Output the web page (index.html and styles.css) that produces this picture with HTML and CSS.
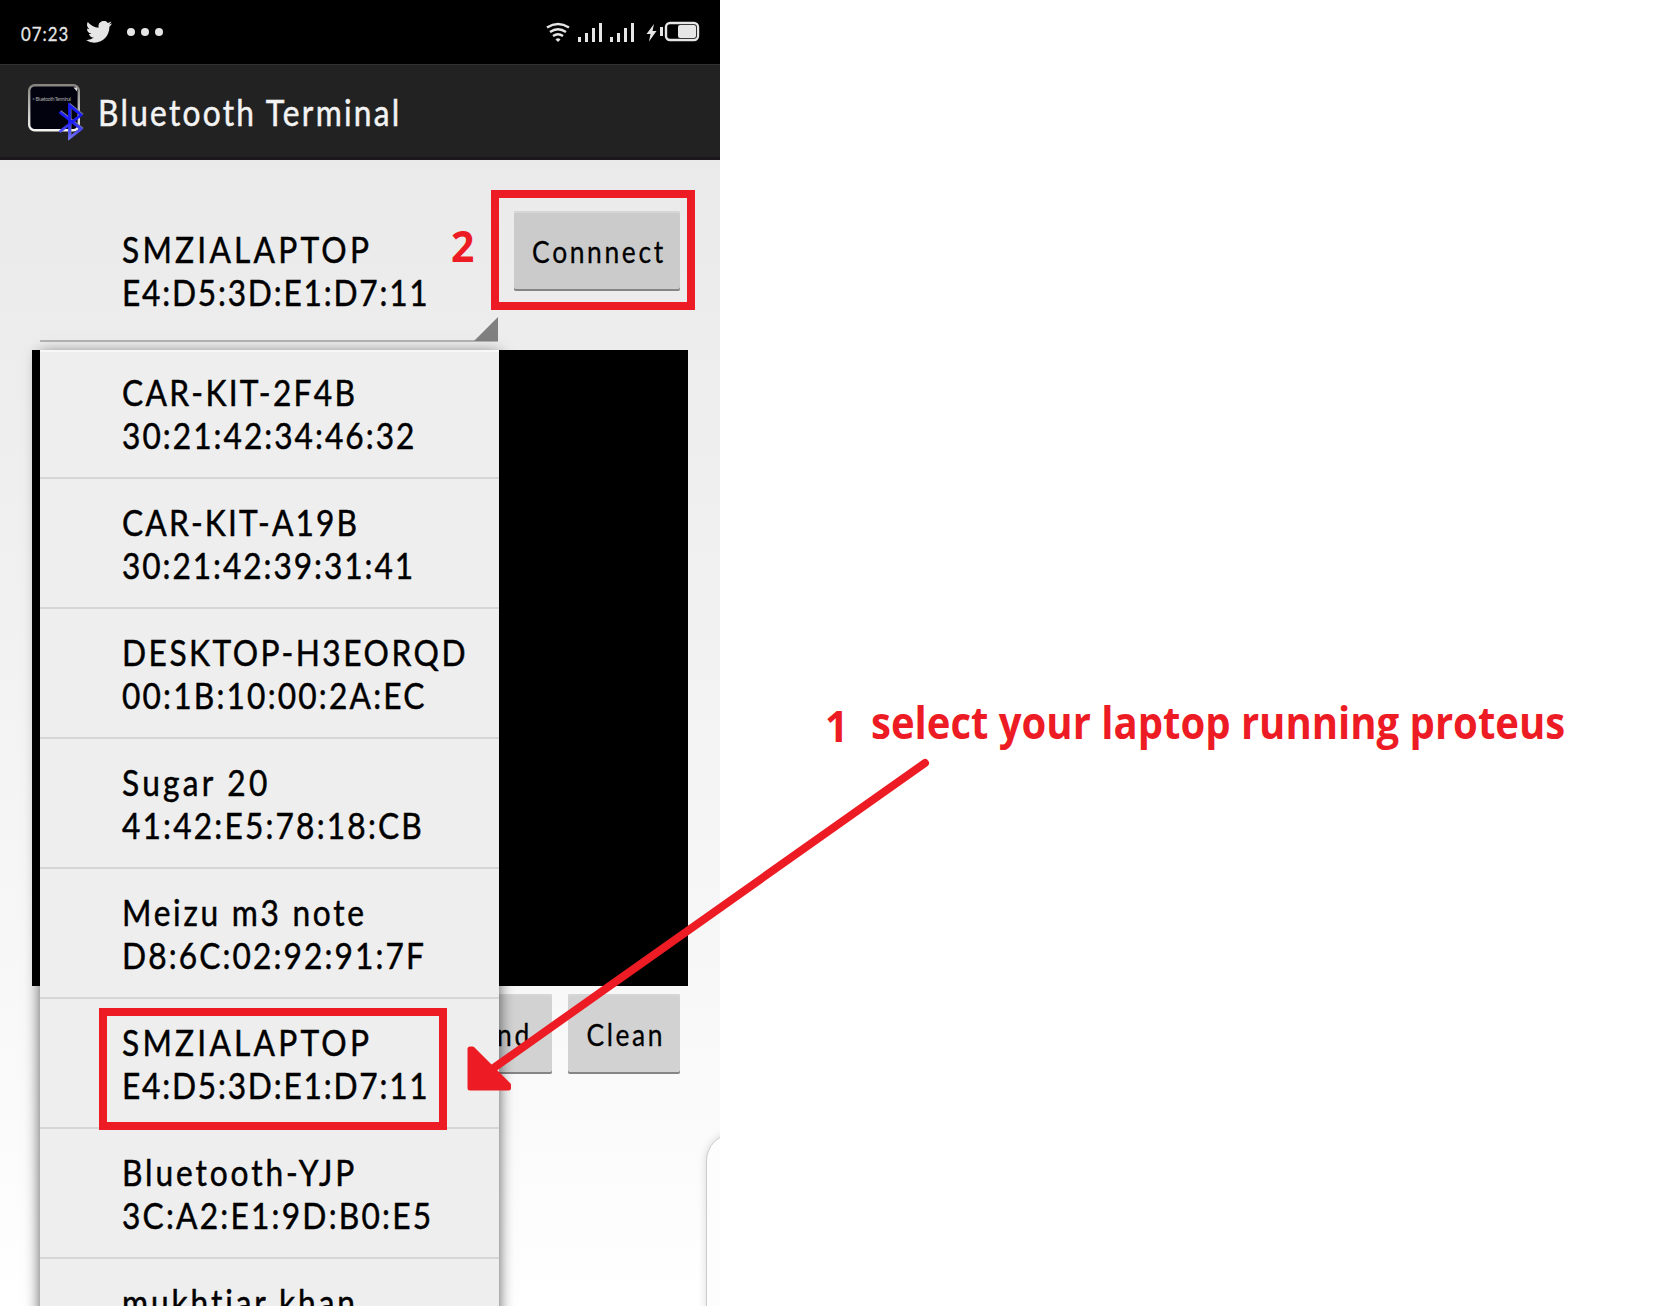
FILE: index.html
```html
<!DOCTYPE html>
<html lang="en">
<head>
<meta charset="utf-8">
<title>Bluetooth Terminal</title>
<link rel="stylesheet" href="styles.css">
</head>
<body>
<main class="phone">
  <header class="status">
    <span class="clock"><span class="t">07:23</span></span>
    <svg class="bird" width="26" height="22" viewBox="0 0 26 22"><path d="M26 2.600a10.500 10.500 0 0 1-3 .9A5.400 5.400 0 0 0 25.300.500a10.500 10.500 0 0 1-3.400 1.400A5.300 5.300 0 0 0 12.700 6.700 15 15 0 0 1 1.800 1a5.300 5.300 0 0 0 1.700 7.200A5.200 5.200 0 0 1 1 7.500a5.400 5.400 0 0 0 4.300 5.300 5.500 5.500 0 0 1-2.400.1 5.300 5.300 0 0 0 5 3.700A10.700 10.700 0 0 1 0 19a15.200 15.200 0 0 0 8.200 2.700c9.800 0 15.500-8.400 15.200-16A10.900 10.900 0 0 0 26 2.600z"/></svg>
    <svg class="dots" width="36" height="8" viewBox="0 0 36 8"><circle cx="4" cy="4" r="4"/><circle cx="18" cy="4" r="4"/><circle cx="32" cy="4" r="4"/></svg>
    <svg class="signals" width="154" height="22" viewBox="546 21 154 22">
      <g class="wifi"><path d="M547 27.500Q558 20.500 569 27.500"/><path d="M550 32Q558 26.500 566 32"/><path d="M553 36Q558 32.500 563 36"/></g>
      <path d="M555.500 39.500Q558 37 560.500 39.500L558 42z"/>
      <path d="M578 37h3v5h-3zM585 33h3v9h-3zM592 28h3v14h-3zM599 23h3v19h-3zM610 37h3v5h-3zM617 33h3v9h-3zM624 28h3v14h-3zM631 23h3v19h-3z"/>
      <path d="M654 24l-7.500 10h4l-1.500 7.500 7.500-10.500h-4zM660 27h3v9h-3z"/>
      <rect class="shell" x="666" y="23" width="32" height="17" rx="4"/>
      <rect x="678" y="25" width="18" height="13" rx="2"/>
    </svg>
  </header>
  <div class="appbar">
    <svg width="58" height="60" viewBox="27 81 58 60">
      <defs><linearGradient id="rim" x2="0" y2="1"><stop offset="0" stop-color="#888580"/><stop offset="1" stop-color="#f4f4f2"/></linearGradient>
      <linearGradient id="blue" x2="0" y2="1"><stop offset=".5" stop-color="#1c1cf4"/><stop offset="1" stop-color="#7474f8"/></linearGradient></defs>
      <rect x="29.200" y="85.200" width="49.600" height="45" rx="5.500" fill="#02020f" stroke="url(#rim)" stroke-width="2.400"/>
      <path d="M73.500 87.500h3.500v4z" fill="#ddd"/>
      <text x="32" y="101" class="tiny" textLength="39">&gt; Bluetooth Terminal</text>
      <path d="M59.500 112L81 129 69.500 138V105.500L81 115 59.500 132" transform="translate(1 -1)" fill="none" stroke="#777ba0" stroke-width="2"/>
      <path d="M59.500 112L81 129 69.500 138V105.500L81 115 59.500 132" fill="none" stroke="url(#blue)" stroke-width="2.800"/>
    </svg>
    <h1><span class="t">Bluetooth Terminal</span></h1>
  </div>
  <section class="content">
    <div class="top">
      <div class="spinner device laptop">
        <p class="t name">SMZIALAPTOP</p><p class="t mac">E4:D5:3D:E1:D7:11</p>
      </div>
      <button class="btn connect"><span class="t">Connnect</span></button>
    </div>
    <div class="terminal"></div>
    <div class="bottom">
      <button class="btn send"><span class="t">Send</span></button>
      <button class="btn clean"><span class="t">Clean</span></button>
    </div>
  </section>
  <ul class="popup">
    <li class="device kit-2f"><p class="t name">CAR-KIT-2F4B</p><p class="t mac">30:21:42:34:46:32</p></li>
    <li class="device kit-a1"><p class="t name">CAR-KIT-A19B</p><p class="t mac">30:21:42:39:31:41</p></li>
    <li class="device desktop"><p class="t name">DESKTOP-H3EORQD</p><p class="t mac">00:1B:10:00:2A:EC</p></li>
    <li class="device sugar"><p class="t name">Sugar 20</p><p class="t mac">41:42:E5:78:18:CB</p></li>
    <li class="device meizu"><p class="t name">Meizu m3 note</p><p class="t mac">D8:6C:02:92:91:7F</p></li>
    <li class="device laptop"><p class="t name">SMZIALAPTOP</p><p class="t mac">E4:D5:3D:E1:D7:11</p></li>
    <li class="device yjp"><p class="t name">Bluetooth-YJP</p><p class="t mac">3C:A2:E1:9D:B0:E5</p></li>
    <li class="device khan"><p class="t name">mukhtiar khan</p></li>
  </ul>
  <div class="handle"></div>
</main>
<div class="mark mark-connect"></div>
<div class="mark mark-laptop"></div>
<span class="note note-two">2</span>
<span class="note note-one">1</span>
<span class="note note-text">select your laptop running proteus</span>
<svg class="arrow" width="470" height="340" viewBox="460 756 470 340"><path d="M925 763L490 1070.500" stroke-width="8" stroke-linecap="round"/><path d="M470 1049V1088H508.500V1085L472.500 1049z" stroke-width="5" stroke-linejoin="round"/></svg>
</body>
</html>
```
FILE: styles.css
```css
* { box-sizing: border-box; }
body { margin: 0; width: 1656px; height: 1306px; overflow: hidden; position: relative; background: #fff; font-family: Lato, "Liberation Sans", sans-serif; color: #000; }
h1, p, ul { margin: 0; padding: 0; font-weight: 400; }

/* narrow, widely spaced lettering */
.t { display: block; width: max-content; white-space: nowrap; transform: scaleX(.88); transform-origin: 0 50%; -webkit-text-stroke: .5px currentColor; }

.phone { position: relative; display: flex; flex-direction: column; width: 720px; height: 1306px; overflow: hidden; background: linear-gradient(#eaeaea 160px, #f0f0f0 550px, #fafafa 1100px, #fff 1306px); }
.status { display: flex; align-items: center; height: 64px; padding: 0 20px; background: #000; color: #e6e6e6; fill: #e6e6e6; }
.clock { width: 65px; margin-left: 1px; padding-top: 2px; font-size: 20px; letter-spacing: 1.2px; }
.clock .t { -webkit-text-stroke-width: .3px; transform: scaleX(.84); }
.dots { margin-left: 15px; }
.signals { margin-left: auto; }
.wifi, .shell { fill: none; stroke: #e6e6e6; stroke-width: 2.4; }
.appbar { display: flex; align-items: center; height: 96px; padding-left: 27px; background: #222; border-top: 1px solid #333; border-bottom: 3px solid #1a181a; color: #f3f3f3; }
.appbar h1 { margin-left: 13px; padding-top: 3px; font-size: 36px; line-height: 43px; letter-spacing: 2.58px; }
.tiny { font-size: 5px; fill: #aaa; }

.content { display: flex; flex-direction: column; padding: 51px 32px 0; }
.top { display: flex; height: 139px; }
.device { padding-left: 82px; font-size: 36px; line-height: 43px; }
.spinner { position: relative; width: 458px; height: 131px; margin-left: 8px; padding-top: 17px; border-bottom: 2px solid #b4b4b4; }
.spinner::after { content: ""; position: absolute; right: 0; bottom: -1px; width: 24px; height: 24px; background: #808080; clip-path: polygon(100% 0, 100% 100%, 0 100%); }
.btn { display: flex; align-items: center; justify-content: center; height: 80px; padding: 0; border: 0; border-radius: 2px; background: #cbcbcb; box-shadow: inset 0 2px #d6d6d6, inset 0 -2px #858585; font: 30px/36px Lato, "Liberation Sans", sans-serif; color: #000; letter-spacing: 3px; }
.btn .t { transform-origin: 50% 50%; margin-left: 4px; -webkit-text-stroke-width: .3px; }
.connect { width: 166px; margin-left: 16px; }
.terminal { height: 636px; background: #000; }
.bottom { display: flex; justify-content: flex-end; gap: 16px; padding: 8px 8px 0; }
.bottom .btn { width: 112px; background: #d2d2d2; }

.popup { position: absolute; left: 40px; top: 350px; width: 459px; height: 970px; list-style: none; background: #eee; box-shadow: 0 4px 14px rgba(0,0,0,.65), inset 0 2px #f8f8f8; }
.popup li { height: 130px; padding-top: 22px; border-bottom: 2px solid #d6d6d6; }
.popup li:first-child { height: 129px; padding-top: 21px; }

.laptop .name { letter-spacing: 3.65px; }
.laptop .mac { letter-spacing: 2.03px; }
.kit-2f .name { letter-spacing: 2.6px; }
.kit-2f .mac { letter-spacing: 2.3px; }
.kit-a1 .name { letter-spacing: 2.45px; }
.kit-a1 .mac { letter-spacing: 2.2px; }
.desktop .name { letter-spacing: 2.84px; }
.desktop .mac { letter-spacing: 2.48px; }
.sugar .name { letter-spacing: 3.7px; }
.sugar .mac { letter-spacing: 2.48px; }
.meizu .name { letter-spacing: 3.1px; }
.meizu .mac { letter-spacing: 2.4px; }
.yjp .name { letter-spacing: 3.3px; }
.yjp .mac { letter-spacing: 2.52px; }
.khan .name { letter-spacing: 3.3px; }

.handle { position: absolute; left: 706px; top: 1133px; width: 60px; height: 200px; border: 1px solid #ccc; border-radius: 28px; background: #fdfdfd; box-shadow: 0 0 8px rgba(0,0,0,.15); }
.mark { position: absolute; border: 8px solid #ed1c24; }
.mark-connect { left: 491px; top: 190px; width: 204px; height: 120px; }
.mark-laptop { left: 99px; top: 1008px; width: 348px; height: 122px; }
.note { position: absolute; color: #ed1c24; font: 700 43px/50px "Open Sans", "Noto Sans", sans-serif; white-space: nowrap; transform-origin: 0 0; transform: scaleX(.95); }
.note-two { left: 451px; top: 221px; }
.note-one { left: 825px; top: 701px; }
.note-text { left: 871px; top: 697px; font-size: 44px; transform: scaleX(.91); }
.arrow { position: absolute; left: 460px; top: 756px; fill: #ed1c24; stroke: #ed1c24; }
```
